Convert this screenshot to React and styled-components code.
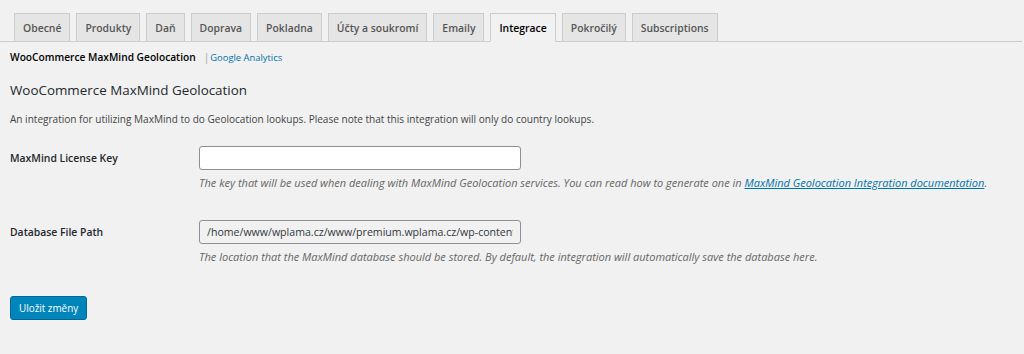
import React from 'react';
import styled, { createGlobalStyle } from 'styled-components';

const FONT = '"Open Sans", "Noto Sans", "Liberation Sans", sans-serif';

const GlobalStyle = createGlobalStyle`
  html, body {
    margin: 0;
    padding: 0;
    background: #f1f1f1;
  }
  body {
    font-family: ${FONT};
    color: #444;
  }
`;

const Page = styled.div`
  width: 1024px;
  height: 354px;
  background: #f1f1f1;
  padding: 13px 0 0 0;
  box-sizing: border-box;
  overflow: hidden;
`;

const TabBar = styled.nav`
  display: flex;
  gap: 6px;
  padding-left: 14px;
  border-bottom: 1px solid #cccccc;
  height: 28px;
  margin-right: 2px;
`;

const Tab = styled.a`
  display: flex;
  align-items: center;
  box-sizing: border-box;
  height: ${p => (p.$active ? '29px' : '28px')};
  padding: 0 8px;
  border: 1px solid #cccccc;
  border-bottom: ${p => (p.$active ? '1px solid #f1f1f1' : 'none')};
  background: ${p => (p.$active ? '#f1f1f1' : '#e5e5e5')};
  color: ${p => (p.$active ? '#000' : '#555')};
  font-size: 10.4px;
  font-weight: 600;
  text-decoration: none;
  white-space: nowrap;
`;

const SubNav = styled.div`
  display: flex;
  align-items: center;
  padding: 7px 0 0 10px;
  font-size: 10.2px;
  height: 16px;
`;

const Current = styled.span`
  color: #000;
  font-weight: 600;
`;

const Sep = styled.span`
  color: #a0a5aa;
  margin-left: 8px;
  margin-right: 1px;
`;

const SubLink = styled.a`
  color: #0073aa;
  text-decoration: none;
  font-size: 9.4px;
`;

const Content = styled.div`
  padding: 0 10px;
`;

const Heading = styled.h2`
  margin: 16px 0 0 0;
  font-size: 13.4px;
  font-weight: 500;
  color: #23282d;
  line-height: 18px;
`;

const Intro = styled.p`
  margin: 12px 0 0 0;
  font-size: 10.05px;
  color: #444;
  line-height: 16px;
`;

const FormTable = styled.div`
  display: grid;
  grid-template-columns: 189px 1fr;
  row-gap: 29px;
  margin-top: 19px;
`;

const Label = styled.label`
  font-size: 10.4px;
  font-weight: 600;
  color: #23282d;
  padding-top: 5px;
`;

const Field = styled.div`
  display: flex;
  flex-direction: column;
  gap: 5px;
`;

const Input = styled.input`
  box-sizing: border-box;
  width: 322px;
  height: 24px;
  padding: 0 7px;
  border: 1px solid #8c8f94;
  border-radius: 3px;
  background: ${p => (p.$filled ? '#f1f1f1' : '#fff')};
  font-family: ${FONT};
  font-size: 10.6px;
  color: #32373c;
  outline: none;
`;

const Desc = styled.p`
  margin: 0;
  font-size: 11px;
  font-style: italic;
  color: #666;
  line-height: 16px;
`;

const DocLink = styled.a`
  color: #0073aa;
  text-decoration: underline;
`;

const Button = styled.button`
  margin-top: 31px;
  height: 24px;
  padding: 0 8px;
  border: 1px solid #006799;
  border-radius: 3px;
  background: #0085ba;
  color: #fff;
  font-family: ${FONT};
  font-size: 9.9px;
  cursor: pointer;
`;

const tabs = [
  'Obecné',
  'Produkty',
  'Daň',
  'Doprava',
  'Pokladna',
  'Účty a soukromí',
  'Emaily',
  'Integrace',
  'Pokročilý',
  'Subscriptions',
];

export default function App() {
  return (
    <Page>
      <GlobalStyle />
      <TabBar>
        {tabs.map(t => (
          <Tab key={t} $active={t === 'Integrace'}>{t}</Tab>
        ))}
      </TabBar>
      <SubNav>
        <Current>WooCommerce MaxMind Geolocation</Current>
        <Sep>|</Sep>
        <SubLink>Google Analytics</SubLink>
      </SubNav>
      <Content>
        <Heading>WooCommerce MaxMind Geolocation</Heading>
        <Intro>
          An integration for utilizing MaxMind to do Geolocation lookups. Please note that this integration will only do country lookups.
        </Intro>
        <FormTable>
          <Label>MaxMind License Key</Label>
          <Field>
            <Input type="text" defaultValue="" />
            <Desc>
              The key that will be used when dealing with MaxMind Geolocation services. You can read how to generate one in{' '}
              <DocLink>MaxMind Geolocation Integration documentation</DocLink>.
            </Desc>
          </Field>
          <Label>Database File Path</Label>
          <Field>
            <Input type="text" $filled readOnly defaultValue="/home/www/wplama.cz/www/premium.wplama.cz/wp-content/uploads/woocommerce_uploads/GeoLite2-Country.mmdb" />
            <Desc>
              The location that the MaxMind database should be stored. By default, the integration will automatically save the database here.
            </Desc>
          </Field>
        </FormTable>
        <Button>Uložit změny</Button>
      </Content>
    </Page>
  );
}
